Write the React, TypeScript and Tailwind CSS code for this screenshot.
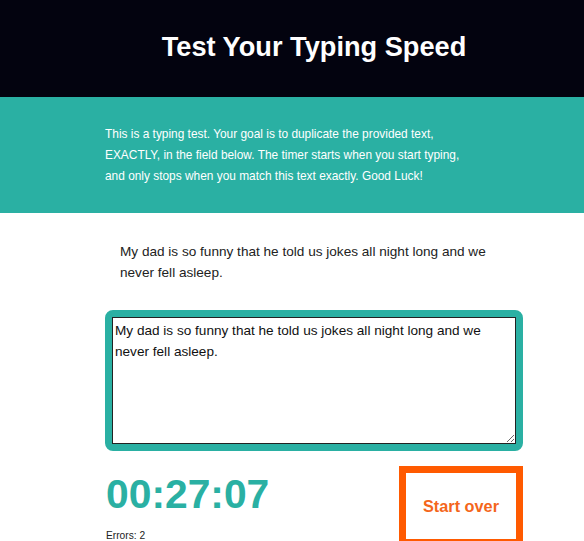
import React, { useState } from "react";

const SAMPLE =
  "My dad is so funny that he told us jokes all night long and we never fell asleep.";

const App: React.FC = () => {
  const [value, setValue] = useState(SAMPLE);

  return (
    <div className="min-h-screen bg-white font-['Liberation_Sans',Arial,sans-serif]">
      <header className="h-[97px] bg-[#03030f] flex items-center">
        <div className="ml-[105px] w-[418px] text-center pb-[3px]">
          <h1 className="text-[27.2px] font-bold text-white">Test Your Typing Speed</h1>
        </div>
      </header>

      <section className="bg-[#2ab0a3] pt-[27px] pb-[26px]">
        <div className="ml-[105px] w-[418px]">
          <p className="w-[366px] text-[11.9px] leading-[21px] text-white">
            This is a typing test. Your goal is to duplicate the provided text,
            EXACTLY, in the field below. The timer starts when you start typing,
            and only stops when you match this text exactly. Good Luck!
          </p>
        </div>
      </section>

      <main className="ml-[105px] w-[418px]">
        <p className="pt-[28px] px-[15px] text-[13.6px] leading-[21px] text-[#222]">
          {SAMPLE}
        </p>

        <div className="mt-[27px] h-[141px] border-[7px] border-[#2ab0a3] rounded-[8px]">
          <textarea
            value={value}
            onChange={(e) => setValue(e.target.value)}
            className="block w-full h-full border border-[#222] bg-white p-[2px] text-[13.6px] leading-[21px] text-[#111] outline-none"
          />
        </div>

        <div className="mt-[15px] flex justify-between items-start">
          <div className="pt-[5px] pl-px">
            <div className="text-[40.8px] leading-[47px] font-bold text-[#2ab0a3]">00:27:07</div>
            <div className="mt-[12px] text-[10.2px] leading-[12px] text-[#222]">Errors: 2</div>
          </div>
          <button
            type="button"
            className="w-[124px] h-[80px] border-[7px] border-[#ff5a00] bg-white text-[16.3px] font-bold text-[#f4661b]"
          >
            Start over
          </button>
        </div>
      </main>
    </div>
  );
};

export default App;
